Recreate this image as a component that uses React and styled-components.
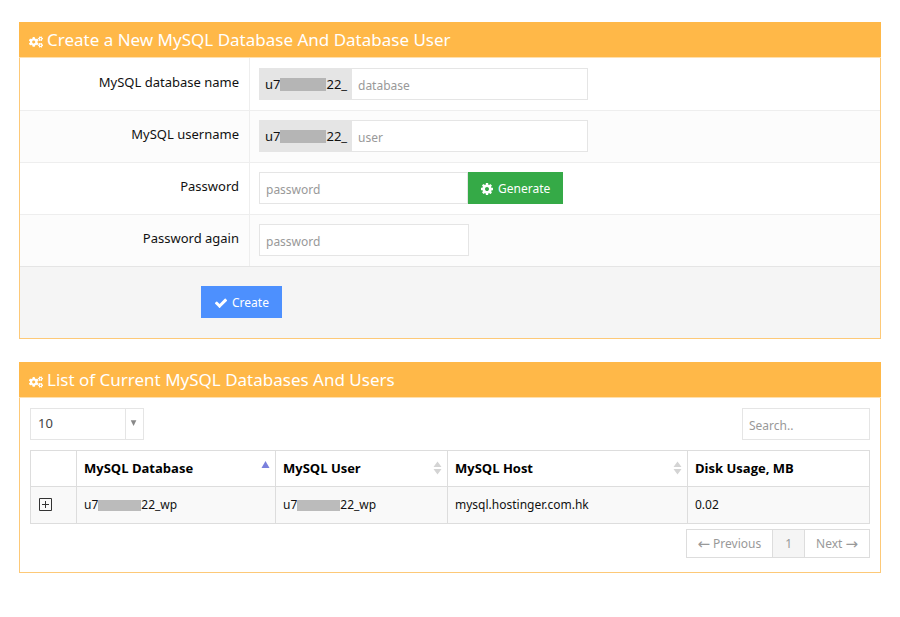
import React from "react";
import styled, { createGlobalStyle } from "styled-components";
import { FaCogs } from "react-icons/fa";

const GlobalStyle = createGlobalStyle`
  *, *::before, *::after { box-sizing: border-box; }
  body {
    margin: 0;
    background: #fff;
    color: #111;
    font: 13px/20px "Noto Sans", "Open Sans", sans-serif;
  }
  button, input, select { font: inherit; }
`;

const Page = styled.main`
  display: flex;
  flex-direction: column;
  gap: 23px;
  padding: 22px 19px;
`;

const Panel = styled.section`
  background: #fff;
  border: 1px solid #fdc978;
  border-top: 0;
`;

const PanelHeader = styled.header`
  display: flex;
  align-items: center;
  gap: 4px;
  height: 36px;
  margin: 0 -1px;
  padding: 0 10px;
  background: #ffb848;
  border-bottom: 1px solid #ffe0ae;
  color: #fff;

  svg { width: 14px; height: 14px; margin-top: 4px; }
`;

const PanelTitle = styled.h2`
  margin: 0;
  font-size: 17px;
  line-height: 24px;
  font-weight: 400;
`;

const FormRow = styled.div`
  display: grid;
  grid-template-columns: 230px 1fr;
  background: ${(p) => (p.$striped ? "#fcfcfc" : "#fff")};

  & + & { box-shadow: inset 0 1px #eee; }
`;

const Label = styled.label`
  padding: 14px 10px 18px;
  border-right: 1px solid #eee;
  text-align: right;
`;

const Field = styled.div`
  display: flex;
  padding: 10px 9px;
`;

const Prefix = styled.span`
  display: flex;
  align-items: center;
  width: 92px;
  height: 32px;
  padding: 0 6px;
  background: #e5e5e5;
`;

const Redacted = styled.span`
  display: inline-block;
  flex: none;
  width: ${(p) => (p.$small ? "43px" : "46px")};
  height: ${(p) => (p.$small ? "11px" : "13px")};
  background: ${(p) => (p.$small ? "#bbb" : "#b5b5b5")};
  vertical-align: middle;
`;

const TextInput = styled.input`
  width: ${(p) => p.$width};
  height: 32px;
  padding: 3px 6px 1px;
  border: 1px solid #e5e5e5;
  border-radius: 0;
  background: #fff;
  color: #333;
  font-size: 12px;

  &::placeholder { color: #999; opacity: 1; }
`;

const Button = styled.button`
  display: flex;
  align-items: center;
  gap: 4px;
  height: 32px;
  padding: 2px 13px 0 12px;
  border: 0;
  background: ${(p) => (p.$tone === "green" ? "#35aa47" : "#4d90fe")};
  color: #fff;
  font-size: 12px;

  svg { width: 14px; height: 14px; }
`;

const FormActions = styled.div`
  display: flex;
  padding: 19px 20px 20px 181px;
  background: #f5f5f5;
  border-top: 1px solid #e5e5e5;

  ${Button} { padding: 2px 13px 0; }
`;

const PanelBody = styled.div`
  padding: 10px 10px 14px;
`;

const Toolbar = styled.div`
  display: flex;
  justify-content: space-between;
  margin-bottom: 10px;
`;

const SelectBox = styled.div`
  display: grid;
  grid-template-columns: 1fr 18px;
  width: 114px;
  height: 32px;
  border: 1px solid #e5e5e5;

  svg {
    grid-area: 1 / 2;
    width: 18px;
    height: 30px;
    border-left: 1px solid #e5e5e5;
    pointer-events: none;
  }
`;

const PageSize = styled.select`
  grid-area: 1 / 1 / 2 / 3;
  appearance: none;
  padding: 0 7px 2px;
  border: 0;
  border-radius: 0;
  background: transparent;
  color: #444;
`;

const Table = styled.table`
  width: 100%;
  table-layout: fixed;
  border-collapse: collapse;
  font-size: 12px;
`;

const Column = styled.col`
  width: ${(p) => p.$width};
`;

const HeadCell = styled.th`
  height: 36px;
  padding: 0 5px 1px 7px;
  border: 1px solid #ddd;
  color: #000;
  font-family: "Open Sans", sans-serif;
  font-size: 13px;
  font-weight: 700;
  text-align: left;
`;

const SortLabel = styled.span`
  display: flex;
  align-items: center;
  justify-content: space-between;
`;

const Cell = styled.td`
  height: 37px;
  padding: 0 7px;
  border: 1px solid #ddd;
  background: #f9f9f9;
  color: #111;
  white-space: nowrap;
`;

const ExpandButton = styled.button`
  display: flex;
  padding: 0;
  border: 0;
  background: none;
`;

const Pagination = styled.nav`
  display: flex;
  justify-content: flex-end;
  margin-top: 5px;
`;

const PageButton = styled.button`
  display: flex;
  align-items: center;
  gap: 3px;
  height: 29px;
  padding: 0 ${(p) => (p.$current ? "12px" : "11px")};
  border: 1px solid #ddd;
  background: ${(p) => (p.$current ? "#f5f5f5" : "#fff")};
  color: #999;
  font-size: 12px;

  & + & { border-left: 0; }
`;

const Arrow = styled.span`
  font-family: "DejaVu Sans", sans-serif;
  font-size: 15px;
`;

const CogIcon = () => (
  <svg viewBox="0 0 1792 1792" fill="currentColor" aria-hidden="true">
    <path d="M1152 896q0-106-75-181t-181-75-181 75-75 181 75 181 181 75 181-75 75-181zm512-109v222q0 12-8 23t-20 13l-185 28q-19 54-39 91 35 50 107 138 10 12 10 25t-9 23q-27 37-99 108t-94 71q-12 0-26-9l-138-108q-44 23-91 38-16 136-29 186-7 28-36 28h-222q-14 0-24.500-8.500t-11.500-21.500l-28-184q-49-16-90-37l-141 107q-10 9-25 9-14 0-25-11-126-114-165-168-7-10-7-23 0-12 8-23 15-21 51-66.500t54-70.500q-27-50-41-99l-183-27q-13-2-21-12.500t-8-23.500v-222q0-12 8-23t19-13l186-28q14-46 39-92-40-57-107-138-10-12-10-24 0-10 9-23 26-36 98.500-107.500t94.500-71.500q13 0 26 10l138 107q44-23 91-38 16-136 29-186 7-28 36-28h222q14 0 24.500 8.500t11.500 21.500l28 184q49 16 90 37l142-107q9-9 24-9 13 0 25 10 129 119 165 170 7 8 7 22 0 12-8 23-15 21-51 66.500t-54 70.500q26 50 41 98l183 28q13 2 21 12.500t8 23.500z" />
  </svg>
);

const CheckIcon = () => (
  <svg viewBox="0 0 1792 1792" fill="currentColor" aria-hidden="true">
    <path d="M1671 566q0 40-28 68l-724 724-136 136q-28 28-68 28t-68-28l-136-136-362-362q-28-28-28-68t28-68l136-136q28-28 68-28t68 28l294 295 656-657q28-28 68-28t68 28l136 136q28 28 28 68z" />
  </svg>
);

const ArrowIcon = () => (
  <svg viewBox="0 0 18 30" aria-hidden="true">
    <path d="M5 11h6l-3 6z" fill="#888" />
  </svg>
);

const SortIcon = ({ active }) => (
  <svg width="9" height="16" viewBox="0 0 9 16" aria-hidden="true">
    {active ? (
      <path d="M4.500 1L8.500 8h-8z" fill="#7a80dd" />
    ) : (
      <path d="M4.500 1.500L8.500 7h-8zM.5 9h8L4.500 14.500z" fill="#d4d4d4" />
    )}
  </svg>
);

const ExpandIcon = () => (
  <svg width="14" height="14" viewBox="0 0 14 14" fill="none" stroke="#333" aria-hidden="true">
    <path d="M1.500 .5h12v12h-12zM4 6.500h7M7.500 3v7" />
  </svg>
);

const fields = [
  { id: "database", label: "MySQL database name", placeholder: "database", prefixed: true, width: "237px" },
  { id: "user", label: "MySQL username", placeholder: "user", prefixed: true, width: "237px" },
  { id: "password", label: "Password", placeholder: "password", secret: true, generate: true, width: "209px" },
  { id: "again", label: "Password again", placeholder: "password", secret: true, width: "210px" },
];

const columns = ["MySQL Database", "MySQL User", "MySQL Host"];

const MaskedName = () => (
  <>u7<Redacted $small />22_wp</>
);

export default function App() {
  return (
    <>
      <GlobalStyle />
      <Page>
        <Panel>
          <PanelHeader>
            <FaCogs aria-hidden="true" />
            <PanelTitle>Create a New MySQL Database And Database User</PanelTitle>
          </PanelHeader>
          <form onSubmit={(e) => e.preventDefault()}>
            {fields.map((f, i) => (
              <FormRow key={f.id} $striped={i % 2 === 1}>
                <Label htmlFor={f.id}>{f.label}</Label>
                <Field>
                  {f.prefixed && <Prefix>u7<Redacted />22_</Prefix>}
                  <TextInput
                    id={f.id}
                    type={f.secret ? "password" : "text"}
                    placeholder={f.placeholder}
                    $width={f.width}
                  />
                  {f.generate && (
                    <Button type="button" $tone="green"><CogIcon />Generate</Button>
                  )}
                </Field>
              </FormRow>
            ))}
            <FormActions>
              <Button type="submit"><CheckIcon />Create</Button>
            </FormActions>
          </form>
        </Panel>

        <Panel>
          <PanelHeader>
            <FaCogs aria-hidden="true" />
            <PanelTitle>List of Current MySQL Databases And Users</PanelTitle>
          </PanelHeader>
          <PanelBody>
            <Toolbar>
              <SelectBox>
                <PageSize aria-label="Rows per page" defaultValue="10">
                  <option>10</option>
                  <option>25</option>
                  <option>50</option>
                </PageSize>
                <ArrowIcon />
              </SelectBox>
              <TextInput type="search" aria-label="Search" placeholder="Search.." $width="128px" />
            </Toolbar>
            <Table>
              <colgroup>
                <Column $width="46px" />
                <Column $width="199px" />
                <Column $width="172px" />
                <Column $width="240px" />
                <Column />
              </colgroup>
              <thead>
                <tr>
                  <HeadCell />
                  {columns.map((name, i) => (
                    <HeadCell key={name} scope="col">
                      <SortLabel>{name}<SortIcon active={i === 0} /></SortLabel>
                    </HeadCell>
                  ))}
                  <HeadCell scope="col">Disk Usage, MB</HeadCell>
                </tr>
              </thead>
              <tbody>
                <tr>
                  <Cell><ExpandButton type="button" aria-label="Show details"><ExpandIcon /></ExpandButton></Cell>
                  <Cell><MaskedName /></Cell>
                  <Cell><MaskedName /></Cell>
                  <Cell>mysql.hostinger.com.hk</Cell>
                  <Cell>0.02</Cell>
                </tr>
              </tbody>
            </Table>
            <Pagination aria-label="Pages">
              <PageButton type="button"><Arrow>←</Arrow>Previous</PageButton>
              <PageButton type="button" $current aria-current="page">1</PageButton>
              <PageButton type="button">Next<Arrow>→</Arrow></PageButton>
            </Pagination>
          </PanelBody>
        </Panel>
      </Page>
    </>
  );
}
